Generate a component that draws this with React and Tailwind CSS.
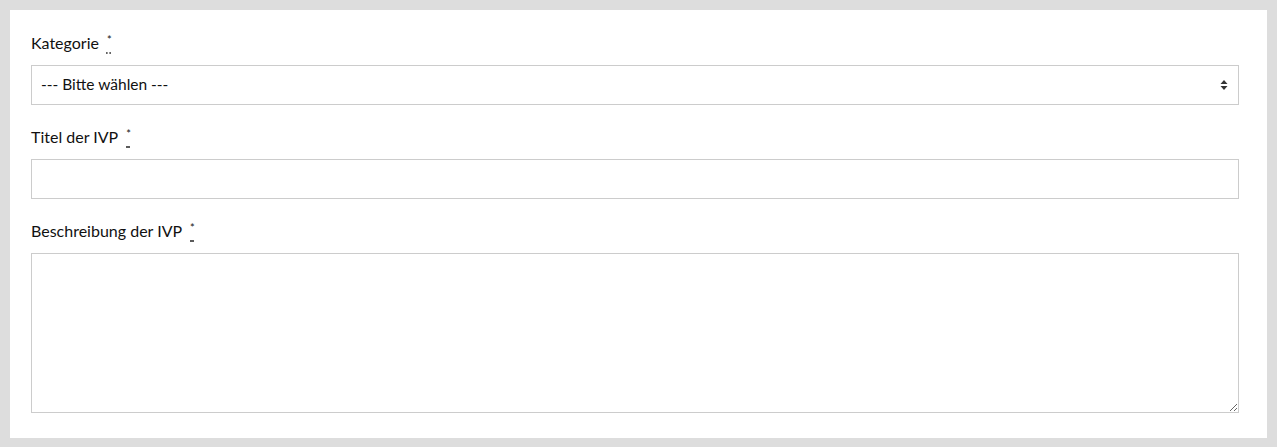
import React from "react";

const Req = () => (
    <abbr title="Pflichtfeld" className="ml-[8px] underline decoration-dotted decoration-[#333] underline-offset-[4px] cursor-help">
        <sup className="text-[11px]">*</sup>
    </abbr>
);

const Label = ({ children }) => (
    <label className="block h-6 leading-6 text-[16px] text-[#111] mb-[10px]">
        {children}
        <Req />
    </label>
);

export default function App() {
    return (
        <div className="min-h-screen bg-[#dddddd] p-[10px]" style={{ fontFamily: "Lato, 'Noto Sans', sans-serif" }}>
            <div className="bg-white pt-[21px] pl-[21px] pr-[28px] pb-[25px]">
                <div>
                    <Label>Kategorie</Label>
                    <div className="relative">
                        <select className="w-full h-10 appearance-none border border-[#cccccc] bg-white pl-[9px] pr-8 text-[15.5px] text-[#111] outline-none">
                            <option>--- Bitte wählen ---</option>
                        </select>
                        <svg className="absolute right-[11px] top-[14px] w-[8px] h-[12px] pointer-events-none" viewBox="0 0 8 12">
                            <path d="M4 1 L7.5 5 H0.5 Z" fill="#333" />
                            <path d="M4 11 L7.5 7 H0.5 Z" fill="#333" />
                        </svg>
                    </div>
                </div>
                <div className="mt-5">
                    <Label>Titel der IVP</Label>
                    <input type="text" className="block w-full h-10 border border-[#cccccc] px-[9px] text-[15px] outline-none" />
                </div>
                <div className="mt-5">
                    <Label>Beschreibung der IVP</Label>
                    <textarea className="block w-full h-40 border border-[#cccccc] px-[9px] py-2 text-[15px] outline-none" />
                </div>
            </div>
        </div>
    );
}
